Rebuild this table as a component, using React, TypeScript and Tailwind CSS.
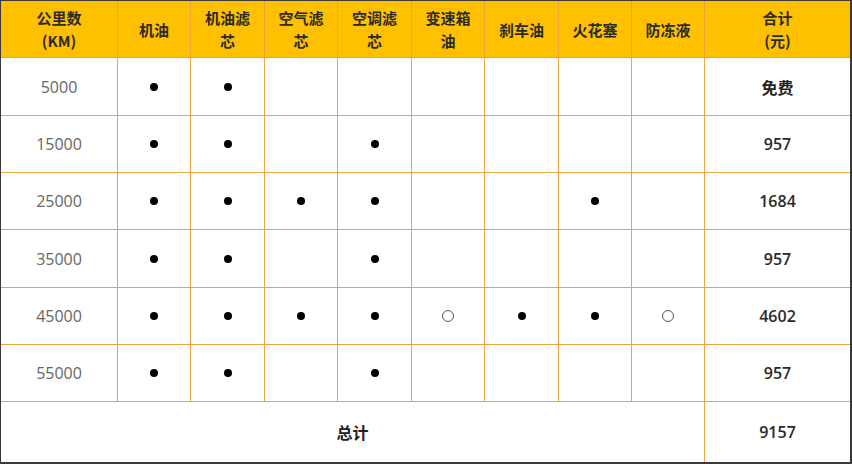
import React from "react";

const headers: React.ReactNode[] = [
  <>公里数<br />(KM)</>,
  "机油",
  <>机油滤<br />芯</>,
  <>空气滤<br />芯</>,
  <>空调滤<br />芯</>,
  <>变速箱<br />油</>,
  "刹车油",
  "火花塞",
  "防冻液",
  <>合计<br />(元)</>,
];

// 1 = 实心点, 2 = 空心圈, 0 = 空
const rows: { km: string; marks: number[]; total: string }[] = [
  { km: "5000", marks: [1, 1, 0, 0, 0, 0, 0, 0], total: "免费" },
  { km: "15000", marks: [1, 1, 0, 1, 0, 0, 0, 0], total: "957" },
  { km: "25000", marks: [1, 1, 1, 1, 0, 0, 1, 0], total: "1684" },
  { km: "35000", marks: [1, 1, 0, 1, 0, 0, 0, 0], total: "957" },
  { km: "45000", marks: [1, 1, 1, 1, 2, 1, 1, 2], total: "4602" },
  { km: "55000", marks: [1, 1, 0, 1, 0, 0, 0, 0], total: "957" },
];

const num = { fontFamily: '"Open Sans", "Noto Sans CJK SC", sans-serif' };

function Mark({ v }: { v: number }) {
  if (v === 1) return <span className="block w-[8px] h-[8px] rounded-full bg-black" />;
  if (v === 2) return <span className="block w-[12px] h-[12px] rounded-full border-[1.5px] border-[#555]" />;
  return null;
}

export default function App() {
  return (
    <div
      className="w-[852px] h-[464px] bg-white border-l border-t border-r-2 border-b-2 border-[#3a3a3a]"
      style={{ fontFamily: '"Noto Sans CJK SC", "Noto Sans", sans-serif' }}
    >
      <div className="grid h-full gap-px bg-[#eba43f] grid-cols-[116px_72px_73px_72px_73px_72px_73px_72px_72px_1fr] grid-rows-[56px_57px_56px_56px_57px_56px_56px_1fr]">
        {headers.map((h, i) => (
          <div
            key={i}
            className="bg-[#ffc000] flex items-center justify-center text-center text-[15px] leading-[23px] font-bold text-[#2b2b2b]"
          >
            <div>{h}</div>
          </div>
        ))}

        {rows.map((r) => (
          <React.Fragment key={r.km}>
            <div className="bg-white flex items-center justify-center text-[16px] text-[#666]" style={num}>
              {r.km}
            </div>
            {r.marks.map((m, j) => (
              <div key={j} className="bg-white flex items-center justify-center">
                <Mark v={m} />
              </div>
            ))}
            {r.total === "免费" ? (
              <div className="bg-white flex items-center justify-center text-[16px] font-bold text-[#222]">免费</div>
            ) : (
              <div className="bg-white flex items-center justify-center text-[16px] font-semibold text-[#2a2a2a]" style={num}>
                {r.total}
              </div>
            )}
          </React.Fragment>
        ))}

        <div className="col-span-9 bg-white flex items-center justify-center text-[16px] font-bold text-[#222]">
          总计
        </div>
        <div className="bg-white flex items-center justify-center text-[16px] font-semibold text-[#2a2a2a]" style={num}>
          9157
        </div>
      </div>
    </div>
  );
}
